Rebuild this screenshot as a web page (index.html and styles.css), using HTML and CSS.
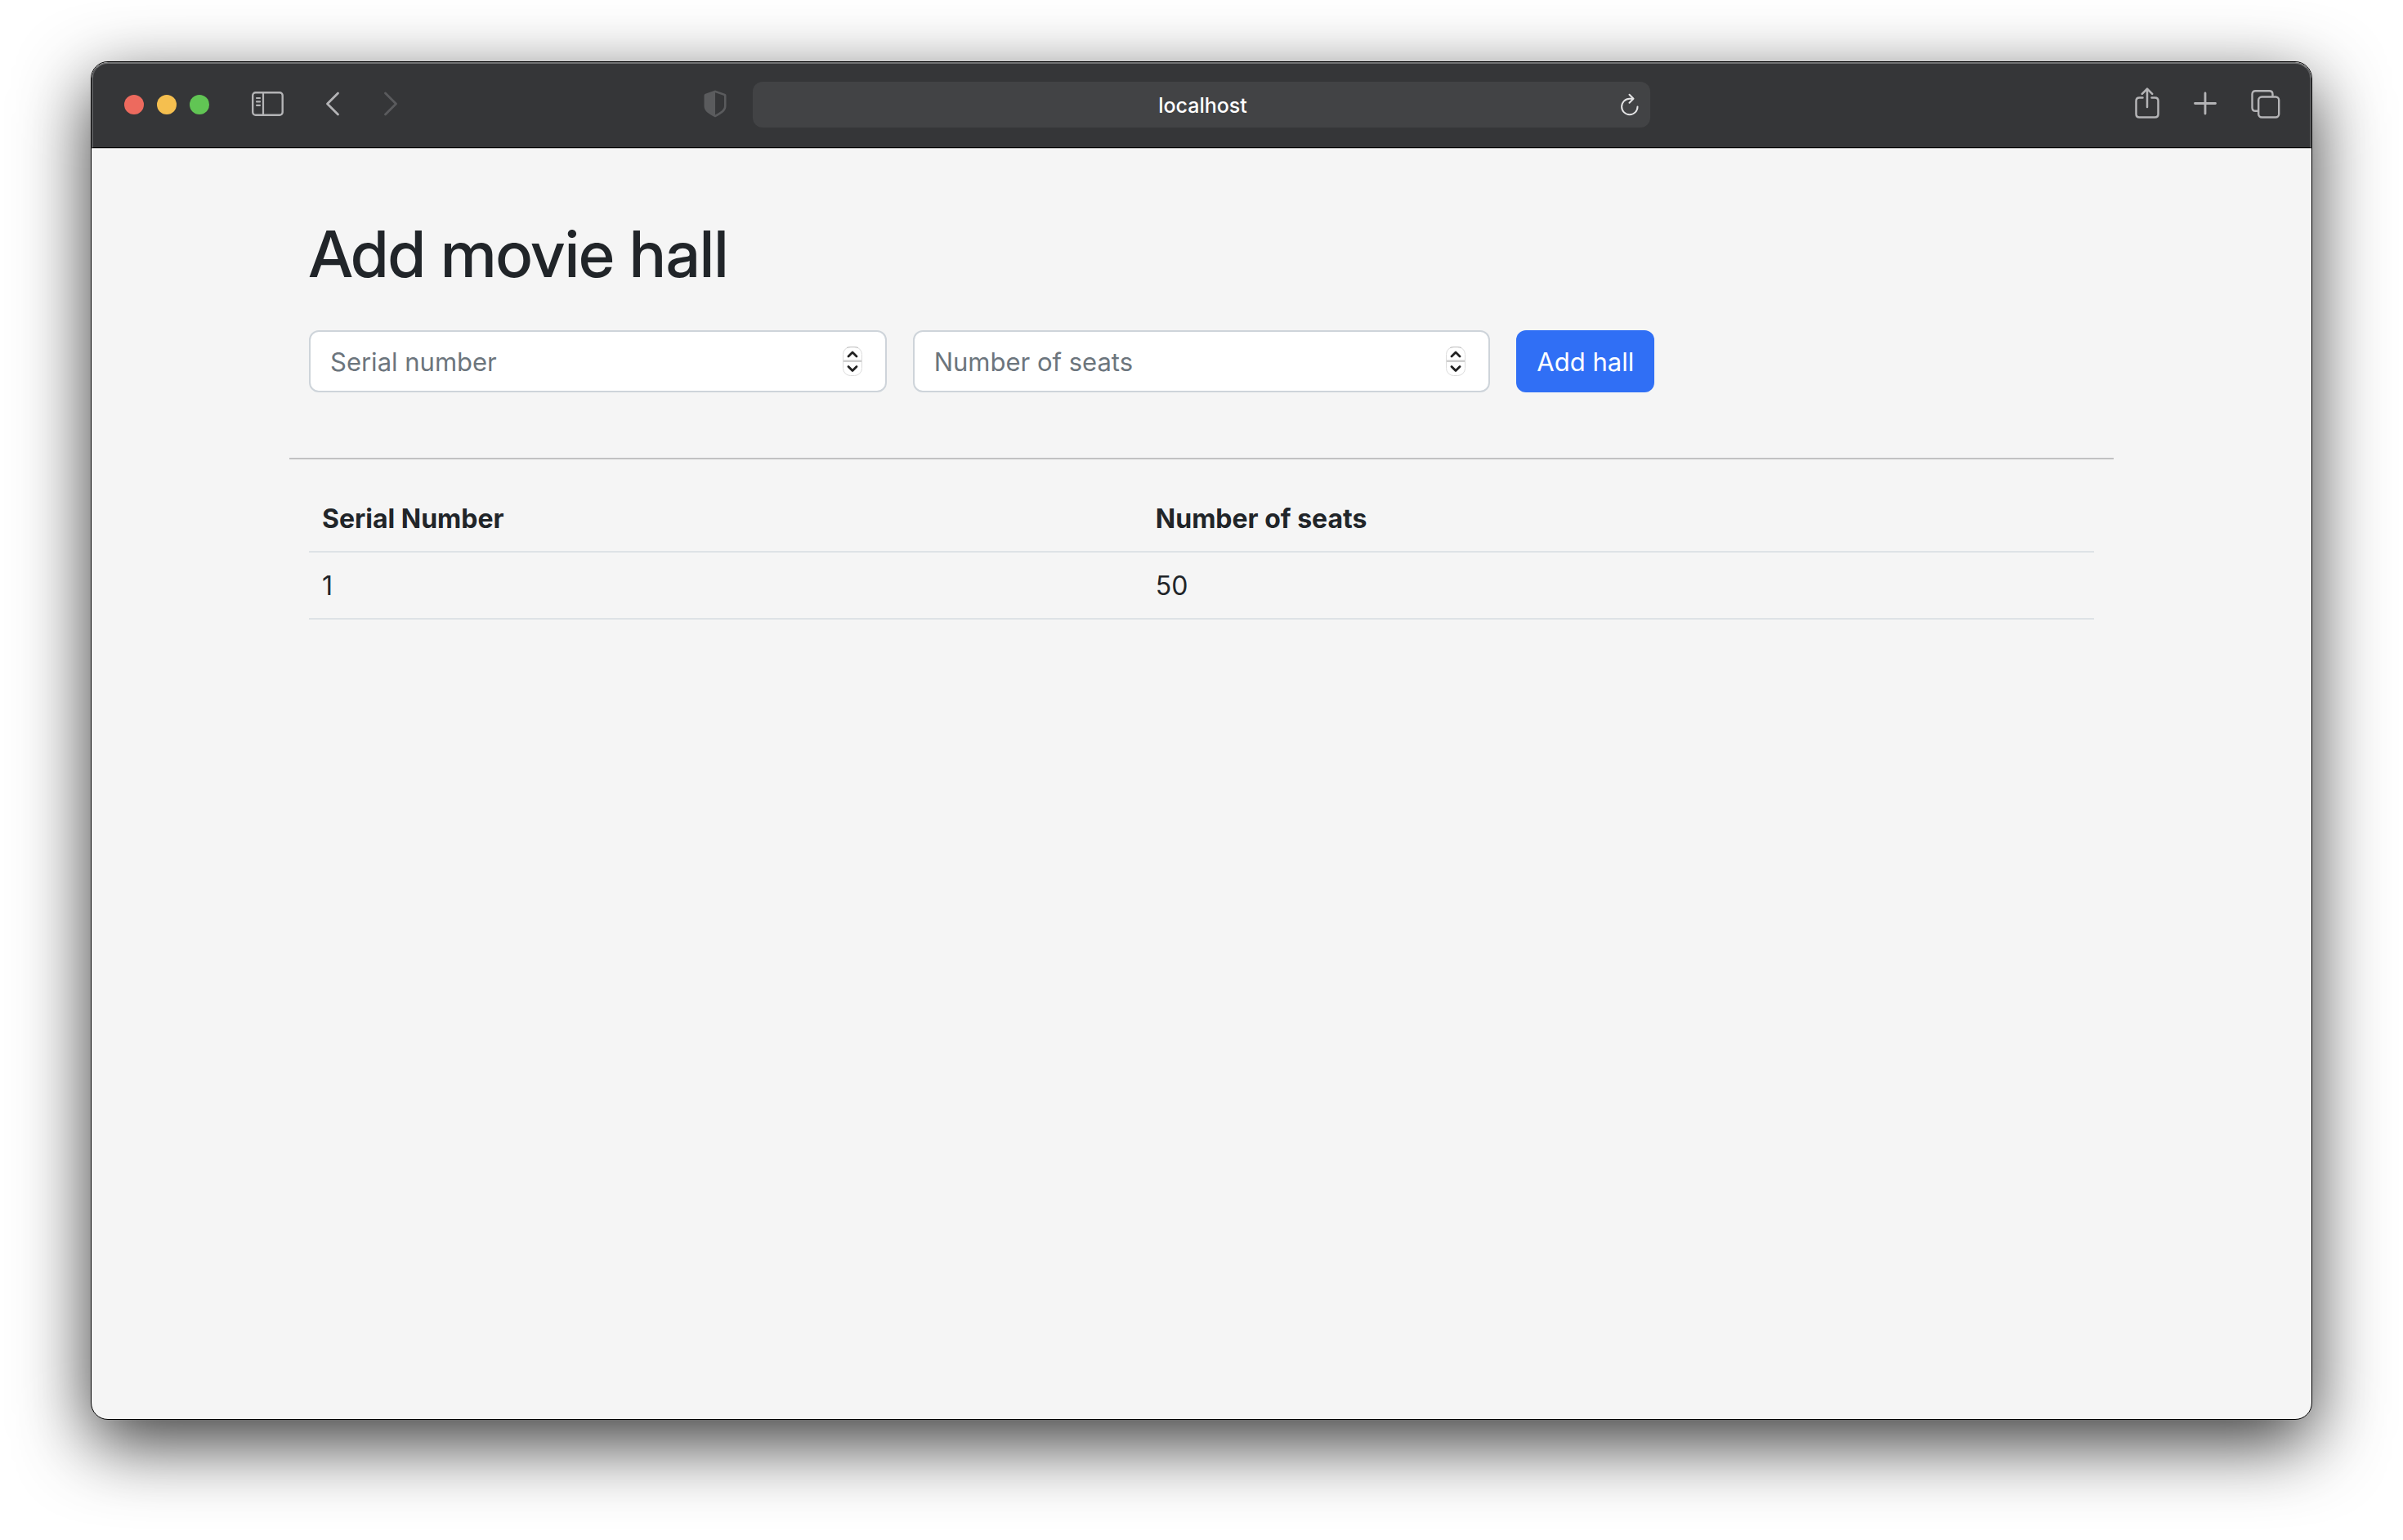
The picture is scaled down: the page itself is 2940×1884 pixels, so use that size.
FILE: index.html
```html
<!DOCTYPE html>
<html lang="en">
<head>
  <meta charset="utf-8">
  <meta name="viewport" content="width=device-width, initial-scale=1">
  <title>Add movie hall</title>
  <link rel="stylesheet" href="styles.css">
</head>
<body>
  <div class="window">
    <header class="toolbar">
      <div class="toolbar-start">
        <div class="lights">
          <button class="light light-close" type="button" aria-label="Close"></button>
          <button class="light light-minimize" type="button" aria-label="Minimize"></button>
          <button class="light light-zoom" type="button" aria-label="Zoom"></button>
        </div>
        <button class="tool tool-sidebar" type="button" aria-label="Sidebar">
          <svg width="40" height="30" viewBox="0 0 40 30" fill="none" stroke="currentColor" stroke-width="2.4" stroke-linecap="round">
            <rect x="1.2" y="1.2" width="36.5" height="27.6" rx="3.5"/>
            <path d="M14 1.5v27M6 8h4M6 12.4h4M6 16.8h4" stroke-width="2.2"/>
          </svg>
        </button>
        <div class="history">
          <button class="tool" type="button" aria-label="Back">
            <svg width="18" height="30" viewBox="0 0 18 30" fill="none" stroke="currentColor" stroke-width="2.8" stroke-linecap="round" stroke-linejoin="round"><path d="M15.5 2L2.500 15l13 13"/></svg>
          </button>
          <button class="tool tool-dim" type="button" aria-label="Forward" disabled>
            <svg width="18" height="30" viewBox="0 0 18 30" fill="none" stroke="currentColor" stroke-width="2.8" stroke-linecap="round" stroke-linejoin="round"><path d="M1.500 2l13 13-13 13"/></svg>
          </button>
        </div>
        <button class="tool tool-shield" type="button" aria-label="Privacy report">
          <svg width="28" height="34" viewBox="0 0 28 34" fill="currentColor">
            <path fill-rule="evenodd" d="M14 .5L26 4.800q1.500.5 1.500 2V20q0 4.500-4.500 8Q19 31 14 33.500 9 31 5 28 .5 24.500.5 20V6.800q0-1.500 1.500-2zM14 3.300V30.600Q18 28.500 21.500 25.800 25 23 25 19.500V7.800q0-.8-.8-1.100z"/>
          </svg>
        </button>
      </div>
      <div class="address">
        <input class="address-input" type="text" value="localhost" aria-label="Address">
        <button class="tool address-reload" type="button" aria-label="Reload">
          <svg width="24" height="28" viewBox="0 0 24 28" fill="none" stroke="currentColor" stroke-width="2" stroke-linecap="round" stroke-linejoin="round">
            <path d="M21.500 16.500A9.700 9.700 0 1 1 11.800 6.800h4.700M11.500 1.800l5 5-5 5"/>
          </svg>
        </button>
      </div>
      <div class="toolbar-end">
        <button class="tool" type="button" aria-label="Share">
          <svg width="30" height="38" viewBox="0 0 30 38" fill="none" stroke="currentColor" stroke-width="2.500" stroke-linecap="round" stroke-linejoin="round">
            <path d="M9.500 12.500H5.500q-4 0-4 4v16q0 4 4 4h19q4 0 4-4v-16q0-4-4-4H20.500M15 24V2M8.800 7.800L15 1.600l6.200 6.200"/>
          </svg>
        </button>
        <button class="tool" type="button" aria-label="New tab">
          <svg width="28" height="38" viewBox="0 0 28 38" fill="none" stroke="currentColor" stroke-width="2.800" stroke-linecap="round"><path d="M14 7v25M1.500 19.500h25"/></svg>
        </button>
        <button class="tool" type="button" aria-label="Tab overview">
          <svg width="36" height="38" viewBox="0 0 36 38" fill="none" stroke="currentColor" stroke-width="2.400" stroke-linejoin="round">
            <rect x="9.200" y="11.500" width="25" height="25" rx="4"/>
            <path d="M9.200 28.800H5.500q-4 0-4-4V8.300q0-4 4-4H22.500q4 0 4 4v3"/>
          </svg>
        </button>
      </div>
    </header>

    <main class="page">
      <div class="container">
        <section class="hall-form">
          <h1 class="title">Add movie hall</h1>
          <form class="form-row">
            <div class="field">
              <input class="control" type="number" placeholder="Serial number" aria-label="Serial number">
              <svg class="spinner" viewBox="0 0 24 38" aria-hidden="true"><use href="#stepper"/></svg>
            </div>
            <div class="field">
              <input class="control" type="number" placeholder="Number of seats" aria-label="Number of seats">
              <svg class="spinner" viewBox="0 0 24 38" aria-hidden="true"><use href="#stepper"/></svg>
            </div>
            <button class="submit" type="submit">Add hall</button>
          </form>
        </section>
        <hr class="divider">
        <section class="hall-list">
          <table class="table">
            <thead>
              <tr><th scope="col">Serial Number</th><th scope="col">Number of seats</th></tr>
            </thead>
            <tbody>
              <tr><td>1</td><td>50</td></tr>
            </tbody>
          </table>
        </section>
      </div>
    </main>
  </div>

  <svg class="symbols" aria-hidden="true">
    <symbol id="stepper" viewBox="0 0 24 38">
      <rect x=".5" y="1.500" width="23" height="35" rx="9" fill="#fff" stroke="#dcdcdc"/>
      <path d="M5 2.500Q7.500 1.500 10 1.500h4q2.500 0 5 1" fill="none" stroke="#bdbdbd"/>
      <path d="M1 17h22v1H1z" fill="#e6e6e6"/>
      <path d="M1 18h22v2H1z" fill="#cfcfcf"/>
      <path d="M7 13l5-5 5 5M7 25.500l5 5 5-5" fill="none" stroke="#222" stroke-width="2.800" stroke-linecap="round" stroke-linejoin="round"/>
    </symbol>
  </svg>
</body>
</html>
```

FILE: styles.css
```css
*,
*::before,
*::after {
  box-sizing: border-box;
}

body {
  display: flex;
  min-height: 100vh;
  margin: 0;
  padding: 75px 111px 147px;
  background: #fff;
  color: #212529;
  font-family: Inter, "Liberation Sans", sans-serif;
  font-size: 32px;
  line-height: 48px;
}

button,
input {
  font: inherit;
}

.symbols {
  position: absolute;
  width: 0;
  height: 0;
}

/* Browser window */

.window {
  display: flex;
  flex: 1;
  flex-direction: column;
  min-width: 0;
  overflow: hidden;
  border: 1px solid #000;
  border-radius: 21px;
  background: #f5f5f5;
  box-shadow: 0 28px 88px rgba(0, 0, 0, 0.78);
}

.toolbar {
  display: grid;
  grid-template-columns: minmax(0, 1fr) minmax(0, 1098px) minmax(0, 1fr);
  align-items: center;
  height: 105px;
  padding-bottom: 2px;
  border: 2px solid #58595b;
  border-top-color: #717273;
  border-bottom: 1px solid #000;
  border-radius: 20px 20px 0 0;
  background: #353638;
}

.toolbar-start,
.toolbar-end,
.lights,
.history {
  display: flex;
  align-items: center;
}

.toolbar-start {
  padding: 0 32px 0 38px;
}

.toolbar-end {
  justify-content: flex-end;
  gap: 42px;
  padding-right: 36px;
}

.lights {
  gap: 16px;
}

.light {
  width: 24px;
  height: 24px;
  padding: 0;
  border: 0;
  border-radius: 50%;
}

.light-close {
  background: #ed6a5e;
}

.light-minimize {
  background: #f5bf4f;
}

.light-zoom {
  background: #61c554;
}

.tool {
  display: block;
  padding: 0 0 2px;
  border: 0;
  background: none;
  color: #b4b4b6;
}

.tool svg {
  display: block;
}

.tool-sidebar {
  margin: 0 50px 0 52px;
}

.history {
  gap: 54px;
}

.tool-dim {
  color: #5a5b5d;
}

.toolbar-end .tool {
  padding-bottom: 4px;
}

.tool-shield {
  margin-left: auto;
  color: #5a5b5d;
}

.address {
  display: flex;
  align-items: center;
  height: 56px;
  padding: 0 13px 0 40px;
  border-radius: 12px;
  background: #424345;
}

.address-input {
  flex: 1;
  min-width: 0;
  padding: 2px 0 0;
  border: 0;
  outline: 0;
  background: none;
  color: #fff;
  font-size: 25px;
  font-weight: 500;
  line-height: 32px;
  text-align: center;
}

.address-reload {
  padding: 0;
  color: #e4e4e5;
}

/* Page */

.page {
  flex: 1;
  padding-top: 80px;
  border-top: 1px solid #b9b9b9;
}

.container {
  max-width: 2280px;
  margin: 0 auto;
  padding: 0 24px;
}

.hall-form,
.hall-list {
  padding: 0 24px;
}

.title {
  margin: 0 0 46px;
  font-family: "Inter Display", Inter, "Liberation Sans", sans-serif;
  font-size: 79px;
  font-weight: 500;
  line-height: 96px;
}

.form-row {
  display: grid;
  grid-template-columns: repeat(3, minmax(0, 1fr));
  gap: 32px;
  font-size: 31px;
}

.field {
  position: relative;
}

.control {
  display: block;
  width: 100%;
  height: 76px;
  padding: 12px 64px 12px 24px;
  border: 2px solid #ced4da;
  border-radius: 12px;
  background: #fff;
  color: #212529;
  appearance: textfield;
}

.control::-webkit-inner-spin-button {
  appearance: none;
  margin: 0;
}

.control::placeholder {
  color: #6c757d;
  opacity: 1;
}

.spinner {
  position: absolute;
  top: 19px;
  right: 30px;
  width: 24px;
  height: 38px;
  pointer-events: none;
}

.submit {
  justify-self: start;
  height: 76px;
  padding: 1px 25px 0;
  border: 0;
  border-radius: 12px;
  background: #306ff5;
  color: #fff;
}

.divider {
  height: 2px;
  margin: 80px 0 32px;
  border: 0;
  background: #c1c1c2;
}

.table {
  width: 100%;
  border-collapse: collapse;
}

.table th,
.table td {
  padding: 17px 16px 15px;
  border-bottom: 2px solid #dee2e6;
  text-align: left;
}

.table th {
  font-weight: 700;
}
```
